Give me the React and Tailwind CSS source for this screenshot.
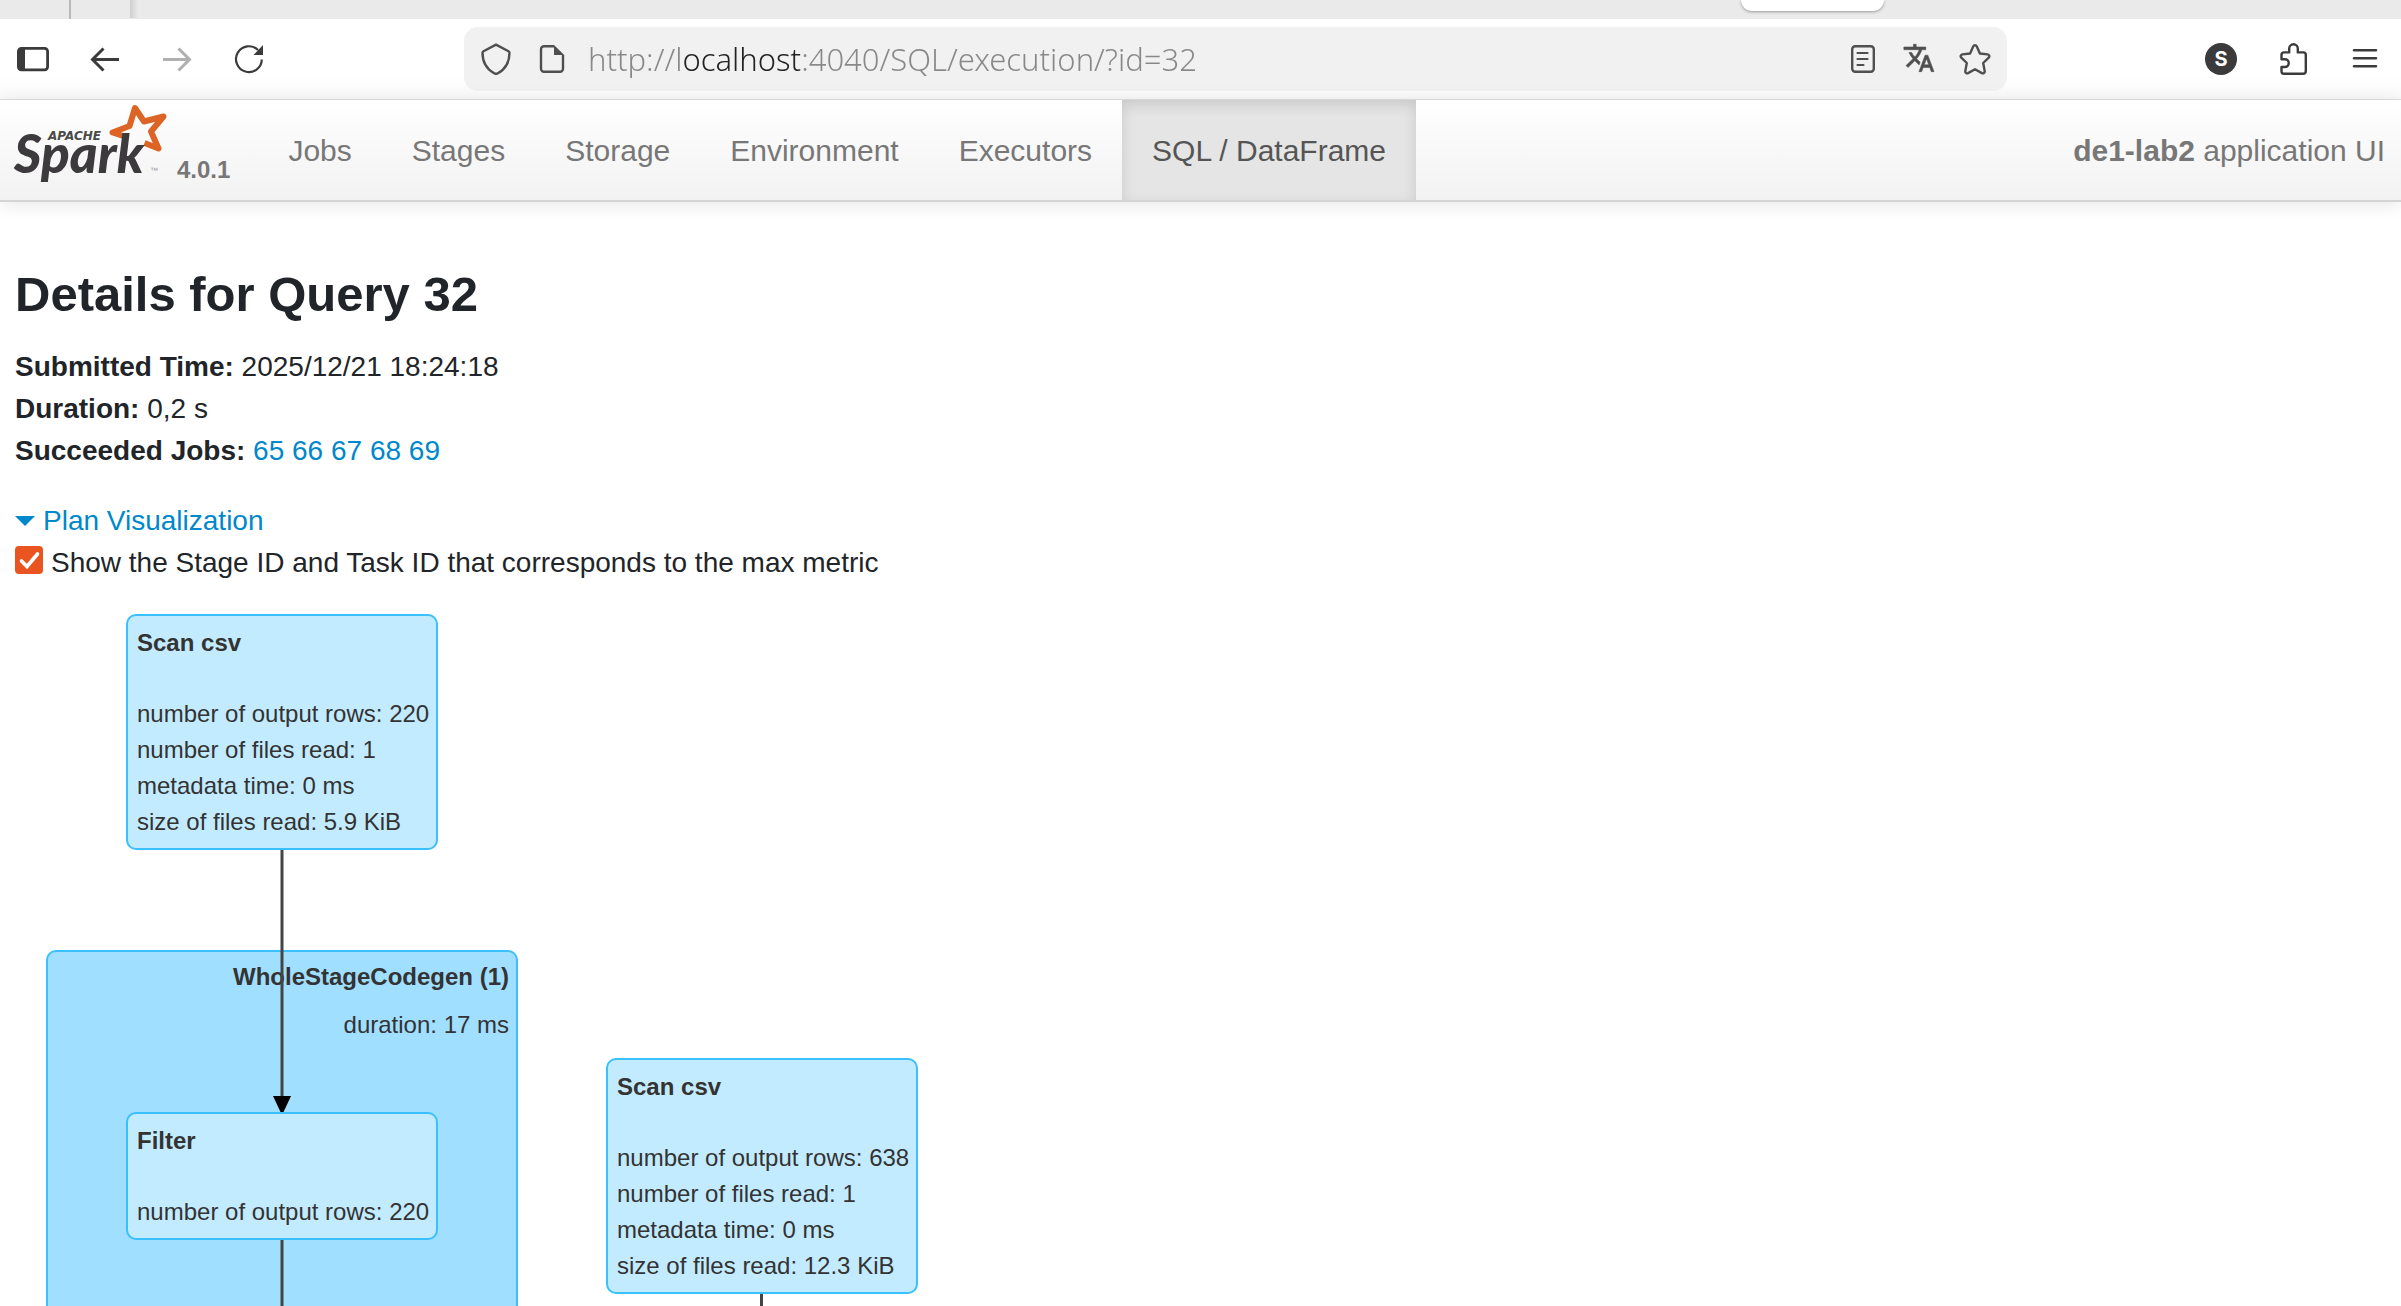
import { useState } from "react";

function Icon({ children, className = "" }) {
  return (
    <svg
      viewBox="0 0 32 32"
      className={`size-8 shrink-0 ${className}`}
      fill="none"
      stroke="currentColor"
      strokeWidth="2.4"
      aria-hidden="true"
    >
      {children}
    </svg>
  );
}

function ToolbarButton({ label, disabled, children }) {
  return (
    <button
      type="button"
      aria-label={label}
      disabled={disabled}
      className="flex size-14 shrink-0 items-center justify-center text-[#3b3b3b] disabled:text-[#b0b0b0]"
    >
      <Icon>{children}</Icon>
    </button>
  );
}

function UrlButton({ label, children }) {
  return (
    <button type="button" aria-label={label} className="shrink-0 text-[#4f4f4f]">
      <Icon>{children}</Icon>
    </button>
  );
}

function TabStrip() {
  return (
    <div className="flex h-[19px] shrink-0 items-start bg-[#eaeaea]">
      <div className="ml-[69px] h-full w-[2px] bg-[#bababa]" />
      <div className="ml-[59px] h-[18px] w-2 bg-linear-to-r from-[#cfcfcf] to-[#eaeaea]" />
      <div className="flex-1" />
      <div className="mr-[517px] h-[11px] w-[143px] rounded-b-[14px] bg-white shadow-[0_1px_3px_rgba(0,0,0,0.35)]" />
    </div>
  );
}

function Toolbar() {
  const [url, setUrl] = useState("http://localhost:4040/SQL/execution/?id=32");
  return (
    <div className="flex h-[81px] shrink-0 items-center border-b border-[#e0e0e0] bg-linear-to-b from-white from-70% to-[#fafafa] pr-2 pl-[5px]">
      <div className="flex gap-4">
        <ToolbarButton label="Toggle sidebar">
          <rect x="1.4" y="5.4" width="29.2" height="21.4" rx="3" strokeWidth="2.8" />
          <path d="M2 6h6v21H2z" fill="currentColor" stroke="none" />
        </ToolbarButton>
        <ToolbarButton label="Back">
          <path d="M30 16.5H4M14.5 5.5 3.5 16.5l11 11" strokeWidth="3" />
        </ToolbarButton>
        <ToolbarButton label="Forward" disabled>
          <path d="M2 16.5h26M17.5 5.5l11 11-11 11" strokeWidth="3" />
        </ToolbarButton>
        <ToolbarButton label="Reload">
          <path d="M28.8 16.5A12.9 12.9 0 1 1 25 7" strokeWidth="2.2" />
          <path d="M30 2v10H20.5z" fill="currentColor" stroke="none" />
        </ToolbarButton>
      </div>
      <div className="mr-[186px] ml-[187px] flex h-16 min-w-0 flex-1 items-center gap-6 rounded-[14px] bg-[#f1f1f1] px-4">
        <UrlButton label="Tracking protection">
          <path
            d="M16 1.6 28.5 8.2c.8.5 1 .9 1 1.600 0 9-4.500 16.500-11.600 20.500-1.300.7-2.500.7-3.800 0C7 26.300 2.500 18.800 2.500 9.800c0-.7.2-1.100 1-1.600z"
            strokeLinejoin="round"
          />
        </UrlButton>
        <UrlButton label="Site information">
          <path d="M18 3.2H8a3 3 0 0 0-3 3v19.600a3 3 0 0 0 3 3h16a3 3 0 0 0 3-3V12" />
          <path d="M18 2l10.200 10H18z" fill="currentColor" stroke="none" />
        </UrlButton>
        <input
          type="text"
          aria-label="Address"
          spellCheck="false"
          value={url}
          onChange={(e) => setUrl(e.target.value)}
          className="-ml-1 h-12 min-w-0 flex-1 bg-[linear-gradient(to_right,#888_95px,#222_95px,#222_214px,#888_214px)] bg-clip-text font-['Noto_Sans','Open_Sans',sans-serif] text-[31px] font-light text-transparent caret-black outline-none"
        />
        <UrlButton label="Reader view">
          <rect x="5.2" y="3.2" width="21.6" height="25.6" rx="3" />
          <path d="M10.5 10h10M10.5 16h10M10.5 22h6" strokeLinecap="round" strokeWidth="2.2" />
        </UrlButton>
        <UrlButton label="Translate this page">
          <path
            transform="translate(-.5 -1.5) scale(1.37)"
            d="M12.87 15.070l-2.540-2.510.03-.03c1.740-1.940 2.980-4.170 3.710-6.530H17V4h-7V2H8v2H1v1.990h11.170C11.500 7.920 10.440 9.750 9 11.350 8.070 10.320 7.300 9.190 6.690 8h-2c.73 1.630 1.730 3.170 2.980 4.560l-5.090 5.020L4 19l5-5 3.110 3.110.76-2.040zM18.500 10h-2L12 22h2l1.120-3h4.750L21 22h2l-4.500-12zm-2.620 7l1.620-4.330L19.120 17h-3.240z"
            fill="currentColor"
            stroke="currentColor"
            strokeWidth="0.4"
          />
        </UrlButton>
        <UrlButton label="Bookmark this page">
          <path
            d="M14.300 3.300c.7-1.400 2.700-1.400 3.400 0l3.200 7.200 7.700.9c1.700.2 2.300 2 1.100 3.200L24.200 20l1.500 8.100c.2 1.700-1.300 2.700-2.800 2L16 26.200l-6.900 3.900c-1.500.7-3-.3-2.800-2L7.800 20l-5.500-5.400c-1.200-1.200-.6-3 1.100-3.200l7.700-.9z"
            strokeLinejoin="round"
          />
        </UrlButton>
      </div>
      <div className="flex gap-4">
        <button
          type="button"
          aria-label="Account"
          className="flex size-14 items-center justify-center"
        >
          <span className="flex size-8 items-center justify-center rounded-full bg-[#3b3b3b] font-['Inter','Liberation_Sans',sans-serif] text-xl leading-8 font-bold text-white">
            S
          </span>
        </button>
        <ToolbarButton label="Extensions">
          <path
            d="M6.900 30.700h19.200a2.700 2.700 0 0 0 2.700-2.700V11.900a2.500 2.500 0 0 0-2.500-2.500H20.800V5.600a4.300 4.300 0 0 0-8.600 0v3.800H7a2.500 2.500 0 0 0-2.500 2.500v4.300h3.400a3.900 3.900 0 0 1 0 7.800H4.500v4.300a2.400 2.400 0 0 0 2.400 2.400z"
            strokeLinejoin="round"
          />
        </ToolbarButton>
        <ToolbarButton label="Open application menu">
          <path d="M5 7.300h22M5 15.300h22M5 23.300h22" strokeLinecap="round" strokeWidth="2.600" />
        </ToolbarButton>
      </div>
    </div>
  );
}

function SparkLogo() {
  return (
    <svg viewBox="0 0 156 80" className="h-20 w-[156px] shrink-0" role="img" aria-label="Apache Spark">
      <path
        d="M115 33.500 99.500 28.500 116.500 22 122 4 131 17.500 150.500 12.500 138 27.500 145.500 44.500 131.500 39"
        fill="none"
        stroke="#dc6526"
        strokeWidth="6"
        strokeLinejoin="round"
      />
      <text
        x="35"
        y="36"
        fill="#4a4a48"
        className="font-['DejaVu_Sans',sans-serif] text-[12px] font-bold italic"
      >
        APACHE
      </text>
      <text
        x="1"
        y="69"
        fill="#3c3a3c"
        className="font-['Lato',sans-serif] text-[53px] font-black italic"
      >
        Spark
      </text>
      <text x="137" y="69" fill="#999" className="font-['Liberation_Sans',sans-serif] text-[8px]">
        ™
      </text>
    </svg>
  );
}

const NAV = ["Jobs", "Stages", "Storage", "Environment", "Executors", "SQL / DataFrame"];

function Navbar() {
  return (
    <nav className="flex h-[102px] shrink-0 items-stretch border-b-2 border-[#d4d4d4] bg-linear-to-b from-white to-[#f2f2f2] pr-4 pl-[13px] text-[30px] text-[#777] shadow-[0_2px_18px_rgba(0,0,0,0.1)]">
      <a href="#home" className="flex items-start gap-2 pt-1">
        <SparkLogo />
        <span className="pt-[52px] text-2xl leading-7 font-bold">4.0.1</span>
      </a>
      <ul className="ml-7 flex">
        {NAV.map((item) => (
          <li key={item} className="flex">
            <a
              href={`#${item}`}
              aria-current={item === "SQL / DataFrame" ? "page" : undefined}
              className="flex items-center px-[30px] pt-0.5 aria-[current=page]:bg-[#e5e5e5] aria-[current=page]:text-[#555] aria-[current=page]:shadow-[inset_0_5px_14px_rgba(0,0,0,0.125)]"
            >
              {item}
            </a>
          </li>
        ))}
      </ul>
      <p className="ml-auto self-center pt-0.5">
        <strong>de1-lab2</strong> application UI
      </p>
    </nav>
  );
}

function PlanNode({ title, metrics, className }) {
  return (
    <div
      className={`absolute w-[312px] rounded-[10px] border-2 border-[#3ac0ff] bg-[#c3ebff] px-[9px] pt-[9px] pb-2 ${className}`}
    >
      <h3 className="mb-[35px] font-bold">{title}</h3>
      {metrics.map((m) => (
        <p key={m} className="whitespace-nowrap">
          {m}
        </p>
      ))}
    </div>
  );
}

function PlanGraph() {
  return (
    <div className="relative flex-1 overflow-hidden text-2xl leading-9 text-[#333]">
      <PlanNode
        className="top-[30px] left-[126px]"
        title="Scan csv"
        metrics={[
          "number of output rows: 220",
          "number of files read: 1",
          "metadata time: 0 ms",
          "size of files read: 5.9 KiB",
        ]}
      />
      <div className="absolute top-[366px] -bottom-4 left-[46px] w-[472px] rounded-[10px] border-2 border-[#3ac0ff] bg-[#a0dfff] px-[7px] pt-[7px] text-right">
        <h3 className="mb-3 font-bold">WholeStageCodegen (1)</h3>
        <p>duration: 17 ms</p>
      </div>
      <PlanNode
        className="top-[528px] left-[126px]"
        title="Filter"
        metrics={["number of output rows: 220"]}
      />
      <PlanNode
        className="top-[474px] left-[606px]"
        title="Scan csv"
        metrics={[
          "number of output rows: 638",
          "number of files read: 1",
          "metadata time: 0 ms",
          "size of files read: 12.3 KiB",
        ]}
      />
      <svg className="absolute top-0 left-0 h-full w-full" aria-hidden="true">
        <path
          d="M282 266V514M282 656V1400M761.500 710V1400"
          stroke="#444"
          strokeWidth="3"
          fill="none"
        />
        <path d="M273 512h18l-7.500 16h-3z" fill="#000" />
      </svg>
    </div>
  );
}

export default function App() {
  const [open, setOpen] = useState(true);
  const [showIds, setShowIds] = useState(true);
  return (
    <div className="flex h-screen flex-col overflow-hidden bg-white font-['Liberation_Sans',Arial,sans-serif] text-[28px] leading-[42px] text-[#212529]">
      <TabStrip />
      <Toolbar />
      <Navbar />
      <main className="flex min-h-0 flex-1 flex-col pt-[62px]">
        <div className="px-[15px]">
          <h1 className="mb-[22px] text-[49px] leading-[60px] font-bold">Details for Query 32</h1>
          <ul>
            <li>
              <strong>Submitted Time:</strong> 2025/12/21 18:24:18
            </li>
            <li>
              <strong>Duration:</strong> 0,2 s
            </li>
            <li>
              <strong>Succeeded Jobs:</strong>
              {[65, 66, 67, 68, 69].map((id) => (
                <span key={id}>
                  {" "}
                  <a href={`#job-${id}`} className="text-[#0088cc]">
                    {id}
                  </a>
                </span>
              ))}
            </li>
          </ul>
          <button
            type="button"
            aria-expanded={open}
            onClick={() => setOpen(!open)}
            className="mt-7 flex items-center gap-2 text-[#0088cc]"
          >
            <svg viewBox="0 0 20 10" className="h-[10px] w-5" aria-hidden="true">
              <path d="M0 0h20L10 10z" fill="currentColor" />
            </svg>
            Plan Visualization
          </button>
          <div className="flex items-start gap-2 text-[28px]">
            <span className="relative mt-1 flex size-7">
              <input
                id="stage-ids"
                type="checkbox"
                checked={showIds}
                onChange={(e) => setShowIds(e.target.checked)}
                className="peer size-7 appearance-none rounded-[4px] border-2 border-[#8f8f8f] checked:border-[#e95420] checked:bg-[#e95420]"
              />
              <svg
                viewBox="0 0 28 28"
                className="pointer-events-none absolute inset-0 hidden size-7 peer-checked:block"
                fill="none"
                stroke="#fff"
                strokeWidth="3.6"
                strokeLinecap="round"
                aria-hidden="true"
              >
                <path d="M6.5 15l5.500 5.500L22.500 8" />
              </svg>
            </span>
            <label htmlFor="stage-ids">
              Show the Stage ID and Task ID that corresponds to the max metric
            </label>
          </div>
        </div>
        {open && <PlanGraph />}
      </main>
    </div>
  );
}
